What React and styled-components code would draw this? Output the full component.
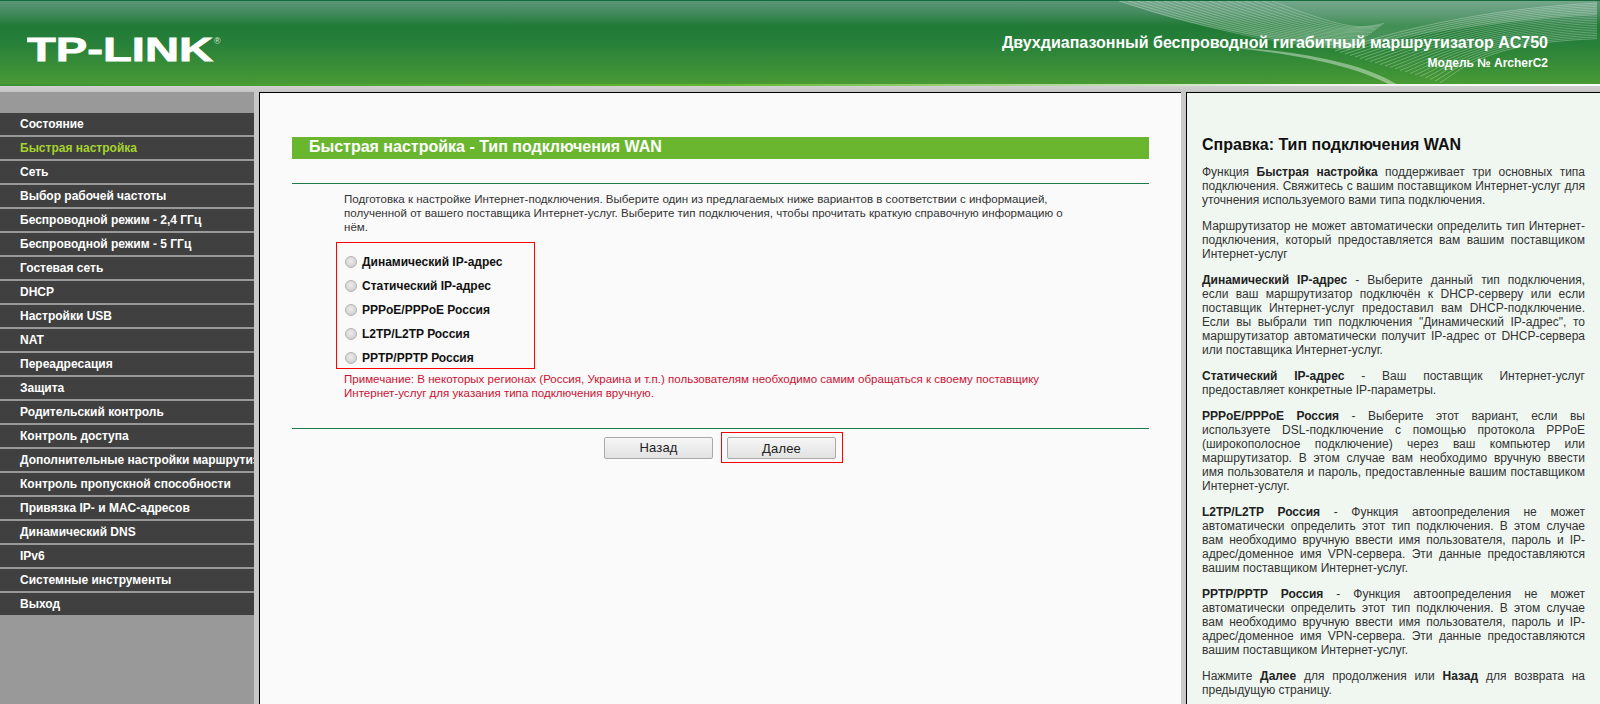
import styled, { createGlobalStyle } from "styled-components";

const GlobalStyle = createGlobalStyle`
  html, body {
    margin: 0;
    padding: 0;
    height: 704px;
    overflow: hidden;
    background: #fff;
    font-family: "Liberation Sans", Arial, sans-serif;
  }
`;

const Page = styled.div`
  display: flex;
  flex-direction: column;
  width: 1600px;
  height: 704px;
  overflow: hidden;
`;

const Header = styled.header`
  position: relative;
  display: flex;
  justify-content: space-between;
  height: 84px;
  flex: none;
  box-sizing: border-box;
  border-top: 1px solid #146c3c;
  background: linear-gradient(180deg, #5a9676 0%, #438a5f 14%, #1f7a35 30%, #27803a 50%, #3d9136 85%, #4a9a35 100%);
  overflow: hidden;
`;

const Waves = styled.svg`
  position: absolute;
  right: 0;
  top: 0;
  pointer-events: none;
`;

const Logo = styled.svg`
  margin: 30px 0 0 27px;
  width: 210px;
  height: 36px;
  position: relative;
`;

const HeaderText = styled.div`
  position: relative;
  padding: 33px 52px 0 0;
  text-align: right;
  color: #fff;
  font-weight: bold;
`;

const Product = styled.div`
  font-size: 16px;
  line-height: 18px;
`;

const ModelNo = styled.div`
  font-size: 12px;
  line-height: 14px;
  margin-top: 4px;
`;

const Strip = styled.div`
  height: 8px;
  flex: none;
  background: linear-gradient(180deg, #f4f4f4 0 1px, #d4d4d4 1px, #c4c4c4 100%);
  position: relative;

  &::before {
    content: "";
    position: absolute;
    left: 0;
    right: 0;
    top: 0;
    height: 2px;
    background: linear-gradient(90deg, #3d9136 0%, #62b82d 45%, #e8efe4 80%, #fff 100%);
  }
`;

const Columns = styled.div`
  display: grid;
  grid-template-columns: 254px 5px 1fr 5px 414px;
  flex: 1;
  min-height: 0;
`;

const Sidebar = styled.nav`
  background: #999;
  padding-top: 21px;
  overflow: hidden;
`;

const Divider = styled.div`
  background: #c8c8c8;
`;

const MenuItem = styled.div`
  height: 22px;
  margin-bottom: 2px;
  padding-left: 20px;
  background: #404040;
  color: ${(p) => (p.$active ? "#a4d32f" : "#fff")};
  font-size: 12px;
  font-weight: bold;
  line-height: 22px;
  white-space: nowrap;
  overflow: hidden;
`;

const Main = styled.main`
  background: #fafafa;
  border: 1px solid #000;
  border-width: 1px 0 0 1px;
  padding: 44px 0 0 32px;
  overflow: hidden;
`;

const TitleBar = styled.div`
  width: 857px;
  height: 22px;
  padding-left: 17px;
  box-sizing: border-box;
  background: #6ab72f;
  color: #fff;
  font-size: 16px;
  font-weight: bold;
  line-height: 20px;
`;

const Rule = styled.hr`
  width: 857px;
  height: 1px;
  border: 0;
  margin: ${(p) => p.$margin};
  background: #1c7a48;
`;

const Intro = styled.p`
  width: 725px;
  margin: 0 0 0 52px;
  font-size: 11.55px;
  line-height: 14px;
  color: #333;
`;

const ChoiceBox = styled.div`
  display: flex;
  flex-direction: column;
  box-sizing: border-box;
  width: 199px;
  height: 127px;
  margin: 8px 0 3px 44px;
  padding-top: 7px;
  border: 1px solid #f00;
`;

const Choice = styled.label`
  display: flex;
  align-items: center;
  height: 24px;
  flex: none;
  padding-left: 8px;
  gap: 5px;
  font-size: 12px;
  font-weight: bold;
  color: #111;
`;

const RadioDot = styled.span`
  width: 12px;
  height: 12px;
  flex: none;
  box-sizing: border-box;
  border: 1px solid #b4b4b4;
  border-radius: 50%;
  background: radial-gradient(circle at 45% 40%, #ececec 0%, #d6d6d6 60%, #c4c4c4 100%);
`;

const Note = styled.p`
  width: 725px;
  margin: 0 0 0 52px;
  font-size: 11.55px;
  line-height: 14px;
  color: #cc1133;
`;

const ButtonRow = styled.div`
  display: flex;
  align-items: center;
  width: 857px;
  padding-left: 312px;
  box-sizing: border-box;
  gap: 8px;
`;

const Highlight = styled.div`
  box-sizing: border-box;
  width: 122px;
  height: 31px;
  padding: 4px 5px;
  border: 1px solid #f00;
`;

const Button = styled.button`
  display: block;
  width: 109px;
  height: 22px;
  padding: 0;
  box-sizing: border-box;
  border: 1px solid #aaa;
  border-radius: 2px;
  background: linear-gradient(180deg, #f6f6f6 0%, #e2e2e2 100%);
  color: #222;
  font-family: "Liberation Sans", Arial, sans-serif;
  font-size: 13px;
  letter-spacing: 0.2px;
`;

const Help = styled.aside`
  background: #f0f7f1;
  border-top: 1px solid #000;
  border-left: 1px solid #000;
  padding: 42px 15px 0 15px;
  overflow: hidden;
`;

const HelpTitle = styled.h2`
  margin: 0 0 10px;
  font-size: 16px;
  line-height: 20px;
  color: #111;
`;

const HelpText = styled.p`
  margin: 0 0 12px;
  font-size: 12px;
  line-height: 14px;
  text-align: justify;
  color: #333;

  b {
    color: #222;
  }
`;

const menu = [
  "Состояние",
  "Быстрая настройка",
  "Сеть",
  "Выбор рабочей частоты",
  "Беспроводной режим - 2,4 ГГц",
  "Беспроводной режим - 5 ГГц",
  "Гостевая сеть",
  "DHCP",
  "Настройки USB",
  "NAT",
  "Переадресация",
  "Защита",
  "Родительский контроль",
  "Контроль доступа",
  "Дополнительные настройки маршрутизации",
  "Контроль пропускной способности",
  "Привязка IP- и MAC-адресов",
  "Динамический DNS",
  "IPv6",
  "Системные инструменты",
  "Выход",
];

const choices = [
  "Динамический IP-адрес",
  "Статический IP-адрес",
  "PPPoE/PPPoE Россия",
  "L2TP/L2TP Россия",
  "PPTP/PPTP Россия",
];

// two fans of thin curves on the right of the banner
const fanDown = Array.from({ length: 18 }, (_, i) =>
  `M${69 + i * 9} 0 C ${150 + i * 9} ${26 + i * 0.3}, ${225 + i * 5} ${44 - i}, ${300 + i * 2} ${48 - i * 1.5}`
);
const fanUp = Array.from({ length: 22 }, (_, i) =>
  `M${285 + i * 5} ${50 + i * 1.5} C ${345 + i * 3} ${30 + i * 2}, ${430} ${8 + i * 1.6}, 547 ${2 + i * 1.7}`
);

export default function App() {
  return (
    <Page>
      <GlobalStyle />
      <Header>
        <Waves width="550" height="84" viewBox="0 0 550 84" fill="none">
          <path d="M69 0 H547 V14 C 470 18 380 30 300 46 C 220 40 140 26 69 0 Z" fill="#fff" opacity="0.16" />
          {fanDown.map((d) => (
            <path key={d} d={d} stroke="#fff" strokeWidth="0.7" opacity="0.38" />
          ))}
          {fanUp.map((d) => (
            <path key={d} d={d} stroke="#fff" strokeWidth="0.7" opacity="0.42" />
          ))}
          <path d="M150 44 C 240 48 310 60 348 84 H340 C 300 62 230 50 150 44 Z" fill="#fff" opacity="0.4" />
        </Waves>
        <Logo viewBox="0 0 210 36">
          <text x="0" y="30" fill="#fff" stroke="#fff" strokeWidth="0.8" fontFamily="Liberation Sans" fontWeight="bold" fontSize="34" textLength="186" lengthAdjust="spacingAndGlyphs">
            TP-LINK
          </text>
          <text x="187" y="13" fill="#dbe9db" fontFamily="Liberation Sans" fontSize="9">®</text>
        </Logo>
        <HeaderText>
          <Product>Двухдиапазонный беспроводной гигабитный маршрутизатор AC750</Product>
          <ModelNo>Модель № ArcherC2</ModelNo>
        </HeaderText>
      </Header>
      <Strip />
      <Columns>
        <Sidebar>
          {menu.map((item) => (
            <MenuItem key={item} $active={item === "Быстрая настройка"}>
              {item}
            </MenuItem>
          ))}
        </Sidebar>
        <Divider />
        <Main>
          <TitleBar>Быстрая настройка - Тип подключения WAN</TitleBar>
          <Rule $margin="24px 0 8px" />
          <Intro>
            Подготовка к настройке Интернет-подключения. Выберите один из предлагаемых ниже вариантов в соответствии с информацией, полученной от вашего поставщика Интернет-услуг. Выберите тип подключения, чтобы прочитать краткую справочную информацию о нём.
          </Intro>
          <ChoiceBox>
            {choices.map((c) => (
              <Choice key={c}>
                <RadioDot />
                {c}
              </Choice>
            ))}
          </ChoiceBox>
          <Note>
            Примечание: В некоторых регионах (Россия, Украина и т.п.) пользователям необходимо самим обращаться к своему поставщику Интернет-услуг для указания типа подключения вручную.
          </Note>
          <Rule $margin="28px 0 3px" />
          <ButtonRow>
            <Button>Назад</Button>
            <Highlight>
              <Button>Далее</Button>
            </Highlight>
          </ButtonRow>
        </Main>
        <Divider />
        <Help>
          <HelpTitle>Справка: Тип подключения WAN</HelpTitle>
          <HelpText>
            Функция <b>Быстрая настройка</b> поддерживает три основных типа подключения. Свяжитесь с вашим поставщиком Интернет-услуг для уточнения используемого вами типа подключения.
          </HelpText>
          <HelpText>
            Маршрутизатор не может автоматически определить тип Интернет-подключения, который предоставляется вам вашим поставщиком Интернет-услуг
          </HelpText>
          <HelpText>
            <b>Динамический IP-адрес</b> - Выберите данный тип подключения, если ваш маршрутизатор подключён к DHCP-серверу или если поставщик Интернет-услуг предоставил вам DHCP-подключение. Если вы выбрали тип подключения "Динамический IP-адрес", то маршрутизатор автоматически получит IP-адрес от DHCP-сервера или поставщика Интернет-услуг.
          </HelpText>
          <HelpText>
            <b>Статический IP-адрес</b> - Ваш поставщик Интернет-услуг предоставляет конкретные IP-параметры.
          </HelpText>
          <HelpText>
            <b>PPPoE/PPPoE Россия</b> - Выберите этот вариант, если вы используете DSL-подключение с помощью протокола PPPoE (широкополосное подключение) через ваш компьютер или маршрутизатор. В этом случае вам необходимо вручную ввести имя пользователя и пароль, предоставленные вашим поставщиком Интернет-услуг.
          </HelpText>
          <HelpText>
            <b>L2TP/L2TP Россия</b> - Функция автоопределения не может автоматически определить этот тип подключения. В этом случае вам необходимо вручную ввести имя пользователя, пароль и IP-адрес/доменное имя VPN-сервера. Эти данные предоставляются вашим поставщиком Интернет-услуг.
          </HelpText>
          <HelpText>
            <b>PPTP/PPTP Россия</b> - Функция автоопределения не может автоматически определить этот тип подключения. В этом случае вам необходимо вручную ввести имя пользователя, пароль и IP-адрес/доменное имя VPN-сервера. Эти данные предоставляются вашим поставщиком Интернет-услуг.
          </HelpText>
          <HelpText>
            Нажмите <b>Далее</b> для продолжения или <b>Назад</b> для возврата на предыдущую страницу.
          </HelpText>
        </Help>
      </Columns>
    </Page>
  );
}
